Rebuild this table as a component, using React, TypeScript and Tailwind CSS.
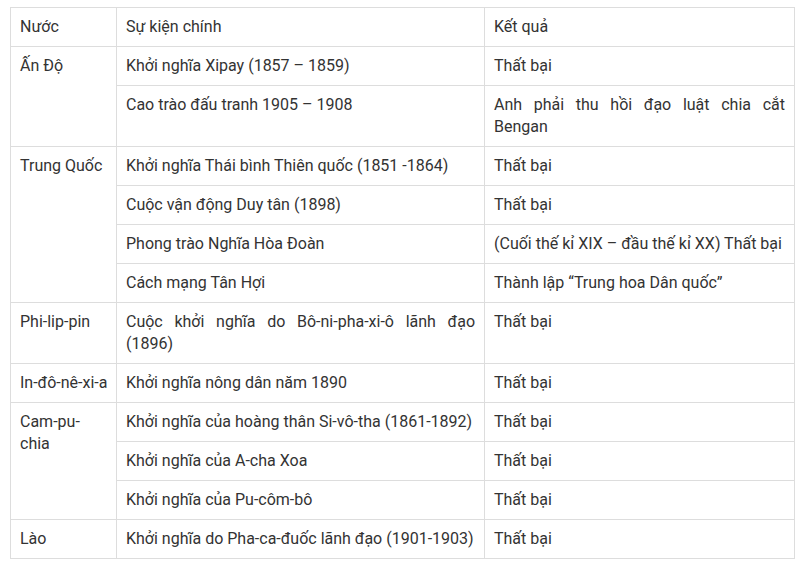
type Row = { country?: string; span?: number; event: string; result: string; justify?: boolean; nowrap?: boolean };

const rows: Row[] = [
  { country: "Ấn Độ", span: 2, event: "Khởi nghĩa Xipay (1857 – 1859)", result: "Thất bại" },
  { event: "Cao trào đấu tranh 1905 – 1908", result: "Anh phải thu hồi đạo luật chia cắt Bengan", justify: true },
  { country: "Trung Quốc", span: 4, event: "Khởi nghĩa Thái bình Thiên quốc (1851 -1864)", result: "Thất bại" },
  { event: "Cuộc vận động Duy tân (1898)", result: "Thất bại" },
  { event: "Phong trào Nghĩa Hòa Đoàn", result: "(Cuối thế kỉ XIX – đầu thế kỉ XX) Thất bại" },
  { event: "Cách mạng Tân Hợi", result: "Thành lập “Trung hoa Dân quốc”" },
  { country: "Phi-lip-pin", span: 1, event: "Cuộc khởi nghĩa do Bô-ni-pha-xi-ô lãnh đạo (1896)", result: "Thất bại", justify: true },
  { country: "In-đô-nê-xi-a", span: 1, event: "Khởi nghĩa nông dân năm 1890", result: "Thất bại", nowrap: true },
  { country: "Cam-pu-chia", span: 3, event: "Khởi nghĩa của hoàng thân Si-vô-tha (1861-1892)", result: "Thất bại" },
  { event: "Khởi nghĩa của A-cha Xoa", result: "Thất bại" },
  { event: "Khởi nghĩa của Pu-côm-bô", result: "Thất bại" },
  { country: "Lào", span: 1, event: "Khởi nghĩa do Pha-ca-đuốc lãnh đạo (1901-1903)", result: "Thất bại" },
];

const cell = "border border-[#dddddd] px-[9px] py-2 align-top";

export default function App() {
  return (
    <div className="min-h-[569px] bg-white pl-[10px] pt-[7px] font-['Roboto',sans-serif] text-[16px] leading-[22px] text-[#333333]">
      <table className="w-[784px] table-fixed border-collapse">
        <colgroup>
          <col className="w-[106px]" />
          <col className="w-[368px]" />
          <col className="w-[310px]" />
        </colgroup>
        <tbody>
          <tr>
            <td className={cell}>Nước</td>
            <td className={cell}>Sự kiện chính</td>
            <td className={cell}>Kết quả</td>
          </tr>
          {rows.map((r) => (
            <tr key={r.event}>
              {r.country && (
                <td className={`${cell} ${r.nowrap ? "whitespace-nowrap" : ""}`} rowSpan={r.span}>
                  {r.country}
                </td>
              )}
              <td className={`${cell} ${r.justify && r.country ? "text-justify" : ""}`}>{r.event}</td>
              <td className={`${cell} ${r.justify && !r.country ? "text-justify" : ""}`}>{r.result}</td>
            </tr>
          ))}
        </tbody>
      </table>
    </div>
  );
}
